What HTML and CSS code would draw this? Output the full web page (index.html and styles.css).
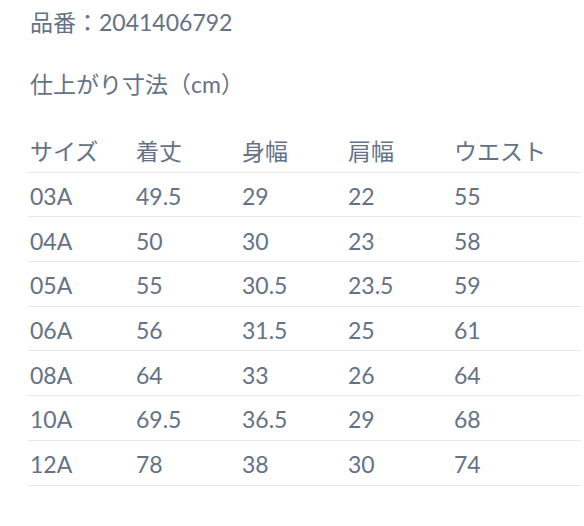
FILE: index.html
```html
<!DOCTYPE html>
<html lang="ja">
<head>
<meta charset="utf-8">
<link rel="stylesheet" href="styles.css">
</head>
<body>
<div class="page">
  <p class="code">品番：2041406792</p>
  <p class="title">仕上がり寸法（cm）</p>
  <table class="sizes">
    <thead>
      <tr><th>サイズ</th><th>着丈</th><th>身幅</th><th>肩幅</th><th>ウエスト</th></tr>
    </thead>
    <tbody>
      <tr><td>03A</td><td>49.5</td><td>29</td><td>22</td><td>55</td></tr>
      <tr><td>04A</td><td>50</td><td>30</td><td>23</td><td>58</td></tr>
      <tr><td>05A</td><td>55</td><td>30.5</td><td>23.5</td><td>59</td></tr>
      <tr><td>06A</td><td>56</td><td>31.5</td><td>25</td><td>61</td></tr>
      <tr><td>08A</td><td>64</td><td>33</td><td>26</td><td>64</td></tr>
      <tr><td>10A</td><td>69.5</td><td>36.5</td><td>29</td><td>68</td></tr>
      <tr><td>12A</td><td>78</td><td>38</td><td>30</td><td>74</td></tr>
    </tbody>
  </table>
</div>
</body>
</html>
```
FILE: styles.css
```css
html, body {
  margin: 0;
  padding: 0;
  background: #ffffff;
}
.page {
  padding: 0 0 0 28px;
  font-family: Lato, "Noto Sans CJK JP", sans-serif;
  color: #647286;
  font-size: 23px;
}
.code {
  margin: 0;
  padding: 6px 0 0 2px;
  line-height: 32px;
}
.title {
  margin: 0;
  padding: 30px 0 0 2px;
  line-height: 32px;
}
.sizes {
  margin-top: 28px;
  border-collapse: collapse;
  width: 553px;
  table-layout: fixed;
}
.sizes th, .sizes td {
  text-align: left;
  font-weight: normal;
  padding: 0 0 0 2px;
  height: 43.7px;
  border-bottom: 1px solid #e8e8e8;
  vertical-align: middle;
}
.sizes td {
  padding-top: 3px;
  height: 40.7px;
}
.sizes th { width: 104px; }
.sizes th:last-child { width: auto; }
```
